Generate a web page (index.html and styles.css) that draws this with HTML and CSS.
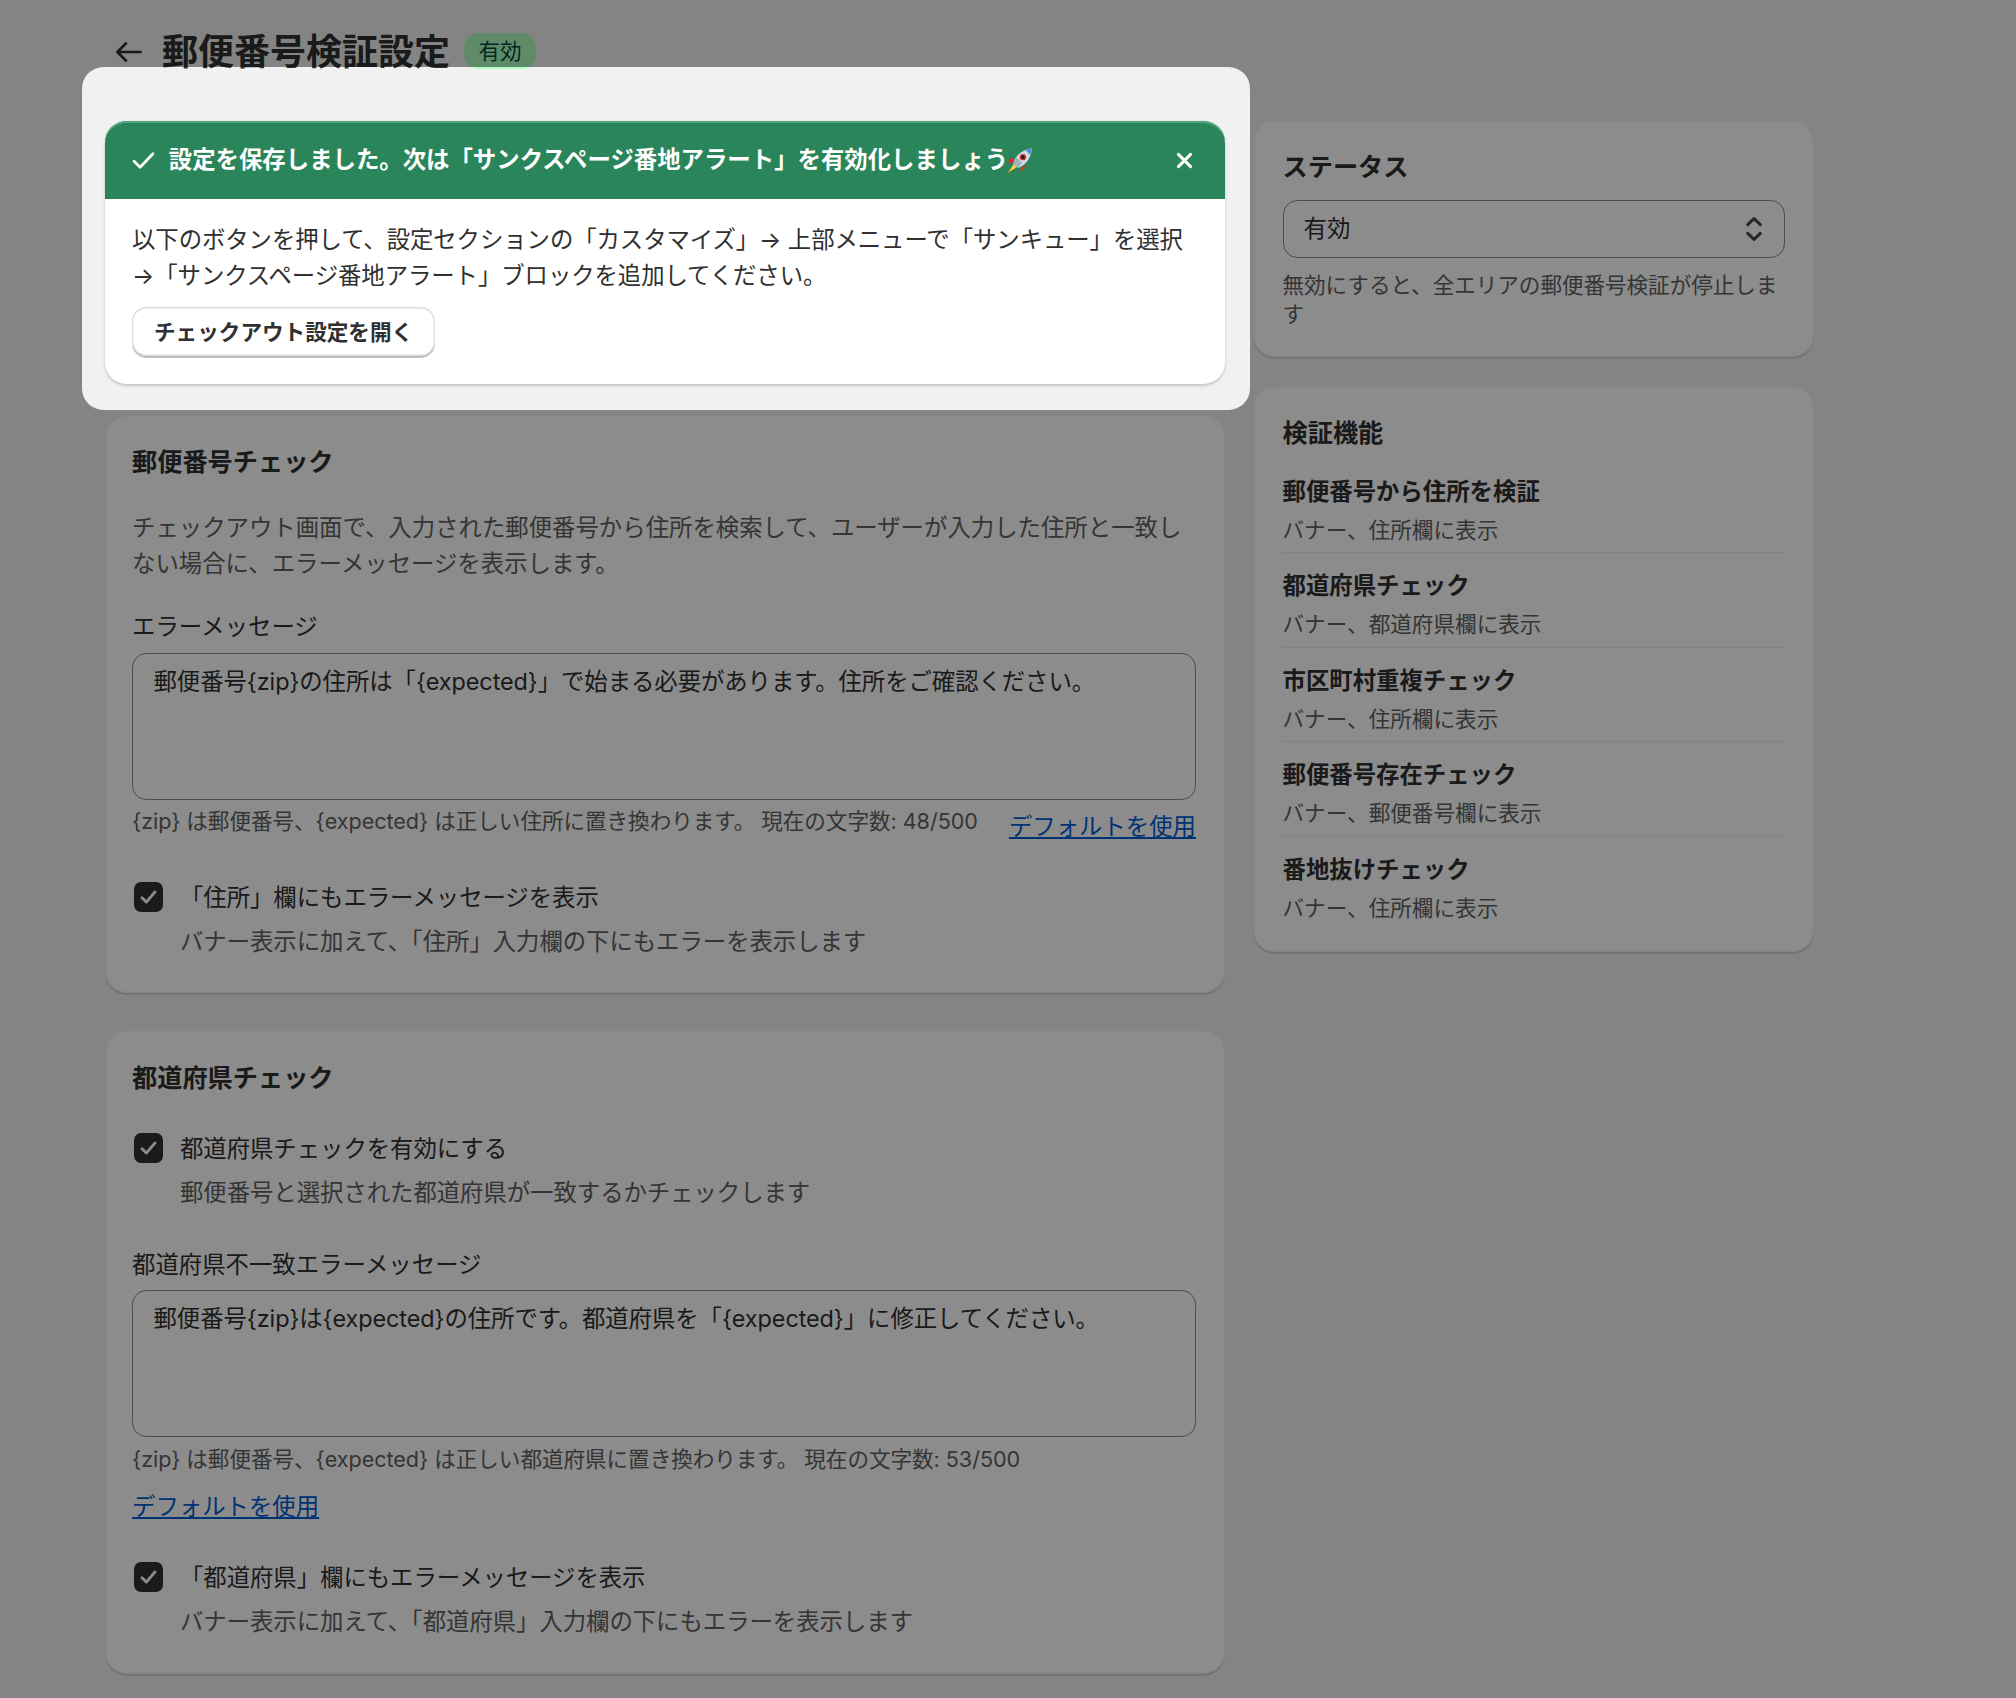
FILE: index.html
```html
<!DOCTYPE html>
<html lang="ja">
<head>
<meta charset="utf-8">
<title>郵便番号検証設定</title>
<link rel="stylesheet" href="styles.css">
</head>
<body>
<div class="page">
  <header class="page-header">
    <svg class="back" viewBox="0 0 20 20" aria-hidden="true"><path d="M16.500 10H3.500M8.300 5.300L3.500 10l4.800 4.700" fill="none" stroke="currentColor" stroke-width="1.500" stroke-linecap="round" stroke-linejoin="round"/></svg>
    <h1>郵便番号検証設定</h1>
    <span class="badge">有効</span>
  </header>
  <div class="layout">
    <main class="col-main">
      <section class="banner">
        <div class="spotlight"></div>
        <div class="banner-head">
          <svg class="banner-check" viewBox="0 0 20 20" aria-hidden="true"><path d="M3 10.500l4.500 4.500 9.500-10" fill="none" stroke="currentColor" stroke-width="2" stroke-linecap="round" stroke-linejoin="round"/></svg>
          <span class="banner-title">設定を保存しました。次は「サンクスページ番地アラート」を有効化しましょう<svg class="rocket" viewBox="0 0 24 24" aria-hidden="true"><path d="M7 15L1 23.500 9.500 18z" fill="#f7a81c"/><path d="M7 15.500L3.500 21 9 18z" fill="#ffe04a"/><path d="M6 9.500L2 11.500l2 3.500 3-1.500zM14.500 18l-2 4 3.500-2 1-4.500z" fill="#dc2f28"/><path d="M6.500 15C7.500 9 13 2.500 23 1c-.5 9.500-6.500 15.500-12.500 17.500z" fill="#d3dbe2"/><path d="M6.500 15c.5-2 1.500-4 3-6l5 5.500c-1.500 1.700-3 3-4 4z" fill="#9fb2c2"/><path d="M17 2.500C19 1.800 21 1.300 23 1c-.2 2.200-.7 4.200-1.500 6z" fill="#4d8fd0"/><circle cx="15" cy="9" r="2.800" fill="#c9322c"/><circle cx="15" cy="9" r="1.600" fill="#14202c"/></svg></span>
          <svg class="banner-close" viewBox="0 0 20 20" aria-hidden="true"><path d="M5.500 5.500l9 9M14.500 5.500l-9 9" fill="none" stroke="currentColor" stroke-width="2.200" stroke-linecap="round"/></svg>
        </div>
        <div class="banner-body">
          <p>以下のボタンを押して、設定セクションの「カスタマイズ」→ 上部メニューで「サンキュー」を選択 →「サンクスページ番地アラート」ブロックを追加してください。</p>
          <button class="btn" type="button">チェックアウト設定を開く</button>
        </div>
      </section>

      <section class="card">
        <h2>郵便番号チェック</h2>
        <p class="muted intro">チェックアウト画面で、入力された郵便番号から住所を検索して、ユーザーが入力した住所と一致しない場合に、エラーメッセージを表示します。</p>
        <div class="field">
          <div class="field-label">エラーメッセージ</div>
          <div class="textarea">郵便番号{zip}の住所は「{expected}」で始まる必要があります。住所をご確認ください。</div>
          <div class="help-row">
            <span class="help">{zip} は郵便番号、{expected} は正しい住所に置き換わります。 現在の文字数: 48/500</span>
            <a class="link" href="#">デフォルトを使用</a>
          </div>
        </div>
        <div class="check check-after-row">
          <span class="box"><svg viewBox="0 0 20 20" aria-hidden="true"><path d="M5.500 10.500l3 3 6-7" fill="none" stroke="#fff" stroke-width="2" stroke-linecap="round" stroke-linejoin="round"/></svg></span>
          <div>
            <div class="check-label">「住所」欄にもエラーメッセージを表示</div>
            <div class="muted check-help">バナー表示に加えて、「住所」入力欄の下にもエラーを表示します</div>
          </div>
        </div>
      </section>

      <section class="card card-spaced">
        <h2>都道府県チェック</h2>
        <div class="check check-first">
          <span class="box"><svg viewBox="0 0 20 20" aria-hidden="true"><path d="M5.500 10.500l3 3 6-7" fill="none" stroke="#fff" stroke-width="2" stroke-linecap="round" stroke-linejoin="round"/></svg></span>
          <div>
            <div class="check-label">都道府県チェックを有効にする</div>
            <div class="muted check-help">郵便番号と選択された都道府県が一致するかチェックします</div>
          </div>
        </div>
        <div class="field field-second">
          <div class="field-label">都道府県不一致エラーメッセージ</div>
          <div class="textarea">郵便番号{zip}は{expected}の住所です。都道府県を「{expected}」に修正してください。</div>
          <div class="help-row wrap">
            <span class="help">{zip} は郵便番号、{expected} は正しい都道府県に置き換わります。 現在の文字数: 53/500</span>
            <a class="link" href="#">デフォルトを使用</a>
          </div>
        </div>
        <div class="check check-after-wrap">
          <span class="box"><svg viewBox="0 0 20 20" aria-hidden="true"><path d="M5.500 10.500l3 3 6-7" fill="none" stroke="#fff" stroke-width="2" stroke-linecap="round" stroke-linejoin="round"/></svg></span>
          <div>
            <div class="check-label">「都道府県」欄にもエラーメッセージを表示</div>
            <div class="muted check-help">バナー表示に加えて、「都道府県」入力欄の下にもエラーを表示します</div>
          </div>
        </div>
      </section>
    </main>

    <aside class="col-side">
      <section class="card">
        <h2>ステータス</h2>
        <div class="select">
          <span>有効</span>
          <svg class="chevrons" viewBox="0 0 20 20" aria-hidden="true"><path d="M6.500 7.600L10 4.200l3.500 3.400M6.500 12.400L10 15.800l3.500-3.400" fill="none" stroke="currentColor" stroke-width="1.700" stroke-linecap="round" stroke-linejoin="round"/></svg>
        </div>
        <p class="muted help select-help">無効にすると、全エリアの郵便番号検証が停止します</p>
      </section>
      <section class="card card-features">
        <h2>検証機能</h2>
        <ul class="features">
          <li><strong>郵便番号から住所を検証</strong><span>バナー、住所欄に表示</span></li>
          <li><strong>都道府県チェック</strong><span>バナー、都道府県欄に表示</span></li>
          <li><strong>市区町村重複チェック</strong><span>バナー、住所欄に表示</span></li>
          <li><strong>郵便番号存在チェック</strong><span>バナー、郵便番号欄に表示</span></li>
          <li><strong>番地抜けチェック</strong><span>バナー、住所欄に表示</span></li>
        </ul>
      </section>
    </aside>
  </div>
</div>
</body>
</html>
```
FILE: styles.css
```css
* { box-sizing: border-box; }
html, body { margin: 0; height: 100%; overflow: hidden; }
body {
  background: #f1f1f1;
  color: #303030;
  font-family: Inter, "Noto Sans CJK JP", sans-serif;
  font-size: 23.4px;
  line-height: 36px;
}
h1, h2, p, ul { margin: 0; padding: 0; }
.page { padding: 24px 202px 0 105px; }

.page-header { display: flex; align-items: center; height: 56px; padding-left: 6px; }
.back { width: 36px; height: 36px; color: #303030; flex: none; margin-right: 15px; }
h1 { font-size: 36px; line-height: 54px; font-weight: 700; color: #303030; }
.badge {
  margin: 0 0 2px 14px;
  height: 36px;
  padding: 0 14.4px;
  border-radius: 14.4px;
  background: #affebf;
  color: #014b40;
  font-size: 21.6px;
  line-height: 36px;
}

.layout { display: grid; grid-template-columns: 1120px 561px; column-gap: 28px; margin-top: 41px; align-items: start; }
.col-main, .col-side { display: flex; flex-direction: column; min-width: 0; }
.col-main { gap: 31px; }
.col-side { margin-top: -1px; gap: 29px; }

.card {
  background: #fff;
  border-radius: 21.6px;
  padding: 28.8px;
  box-shadow: 0 1.8px 0 rgba(0,0,0,.14), inset 0 0 0 1.4px rgba(0,0,0,.05);
}
.card h2 { font-size: 25.2px; line-height: 36px; font-weight: 700; }
.col-main .card { padding: 29px 29px 33px 27px; }
.col-main .card-spaced { margin-top: 6px; padding-top: 30px; padding-bottom: 34px; }
.col-side .card { padding-left: 29.5px; padding-right: 29.5px; }
.card-features { padding-bottom: 26px; }

.banner {
  position: relative;
  background: #fff;
  border-radius: 21.6px;
  box-shadow: 0 1.8px 3px rgba(0,0,0,.18);
}
.spotlight {
  position: absolute;
  inset: -54px -25px -26px -23px;
  border-radius: 21.6px;
  box-shadow: 0 0 0 3000px rgba(0,0,0,.45);
  pointer-events: none;
}
.banner-head {
  display: flex;
  align-items: center;
  height: 78px;
  padding: 0 28.8px;
  background: #2b855a;
  color: #fff;
  border-radius: 21.6px 21.6px 0 0;
  box-shadow: inset 0 2px 0 #50a880;
  font-weight: 600;
}
.banner-check { width: 27px; height: 27px; flex: none; margin-right: 12px; margin-left: -4px; }
.banner-title { flex: 1; display: flex; align-items: center; white-space: nowrap; }
.rocket { width: 27px; height: 27px; flex: none; margin-left: -2px; }
.banner-close { width: 27px; height: 27px; flex: none; margin-right: -2px; }
.banner-body { padding: 23px 27px 28px; }
.banner-body p { letter-spacing: -0.07px; }
.btn {
  display: block;
  margin-top: 13px;
  height: 49px;
  padding: 0 22px;
  background: #fff;
  color: #303030;
  border: 0;
  border-radius: 14.4px;
  font: 600 21.6px/36px Inter, "Noto Sans CJK JP", sans-serif;
  box-shadow: 0 1.8px 0 #b5b5b5, inset 0 0 0 1.4px #dedede;
}

.muted { color: #616161; }
.intro { margin-top: 30px; }
.field { margin-top: 27px; }
.field-label { line-height: 36px; }
.textarea {
  margin-top: 8px;
  height: 147px;
  padding: 10px 20.5px;
  border: 1.8px solid #8a8a8a;
  border-radius: 14.4px;
  color: #303030;
  letter-spacing: -0.07px;
}
.field-second .textarea { margin-top: 7px; }
.help { font-size: 21.6px; line-height: 28.8px; color: #616161; letter-spacing: -0.05px; }
.help-row { display: flex; justify-content: space-between; align-items: flex-start; margin-top: 7px; }
.help-row > .link { margin-top: 2px; }
.help-row.wrap { display: block; margin-top: 8px; }
.help-row.wrap .help { display: block; }
.help-row.wrap .link { display: inline-block; margin-top: 15px; }
.link { color: #005bd3; text-decoration: underline; font-size: 23.4px; line-height: 36px; white-space: nowrap; }

.check { display: flex; gap: 17px; }
.box {
  flex: none;
  width: 29px;
  height: 30px;
  margin: 2px 0 0 2px;
  background: #303030;
  border-radius: 7.2px;
  display: flex;
}
.box svg { width: 100%; height: 100%; }
.check-label { letter-spacing: -0.05px; }
.check-help { margin-top: 8px; letter-spacing: -0.05px; }
.check-after-row { margin-top: 35px; }
.check-first { margin-top: 35px; }
.field-second { margin-top: 36px; }
.check-after-wrap { margin-top: 35px; }

.select {
  display: flex;
  align-items: center;
  justify-content: space-between;
  height: 58px;
  margin-top: 15px;
  padding: 0 20px;
  border: 1.8px solid #8a8a8a;
  border-radius: 14.4px;
  color: #303030;
}
.chevrons { width: 36px; height: 36px; color: #4a4a4a; margin-right: -8px; }
.select-help { margin-top: 13px; }

.features { list-style: none; margin-top: 23px; }
.features li { display: flex; flex-direction: column; padding-bottom: 4.5px; border-bottom: 1.8px solid #ebebeb; margin-bottom: 15px; }
.features li:last-child { border-bottom: 0; margin-bottom: 0; padding-bottom: 0; }
.features strong { font-weight: 700; line-height: 36px; }
.features span { font-size: 21.6px; line-height: 36px; color: #616161; margin-top: 2px; }
```
